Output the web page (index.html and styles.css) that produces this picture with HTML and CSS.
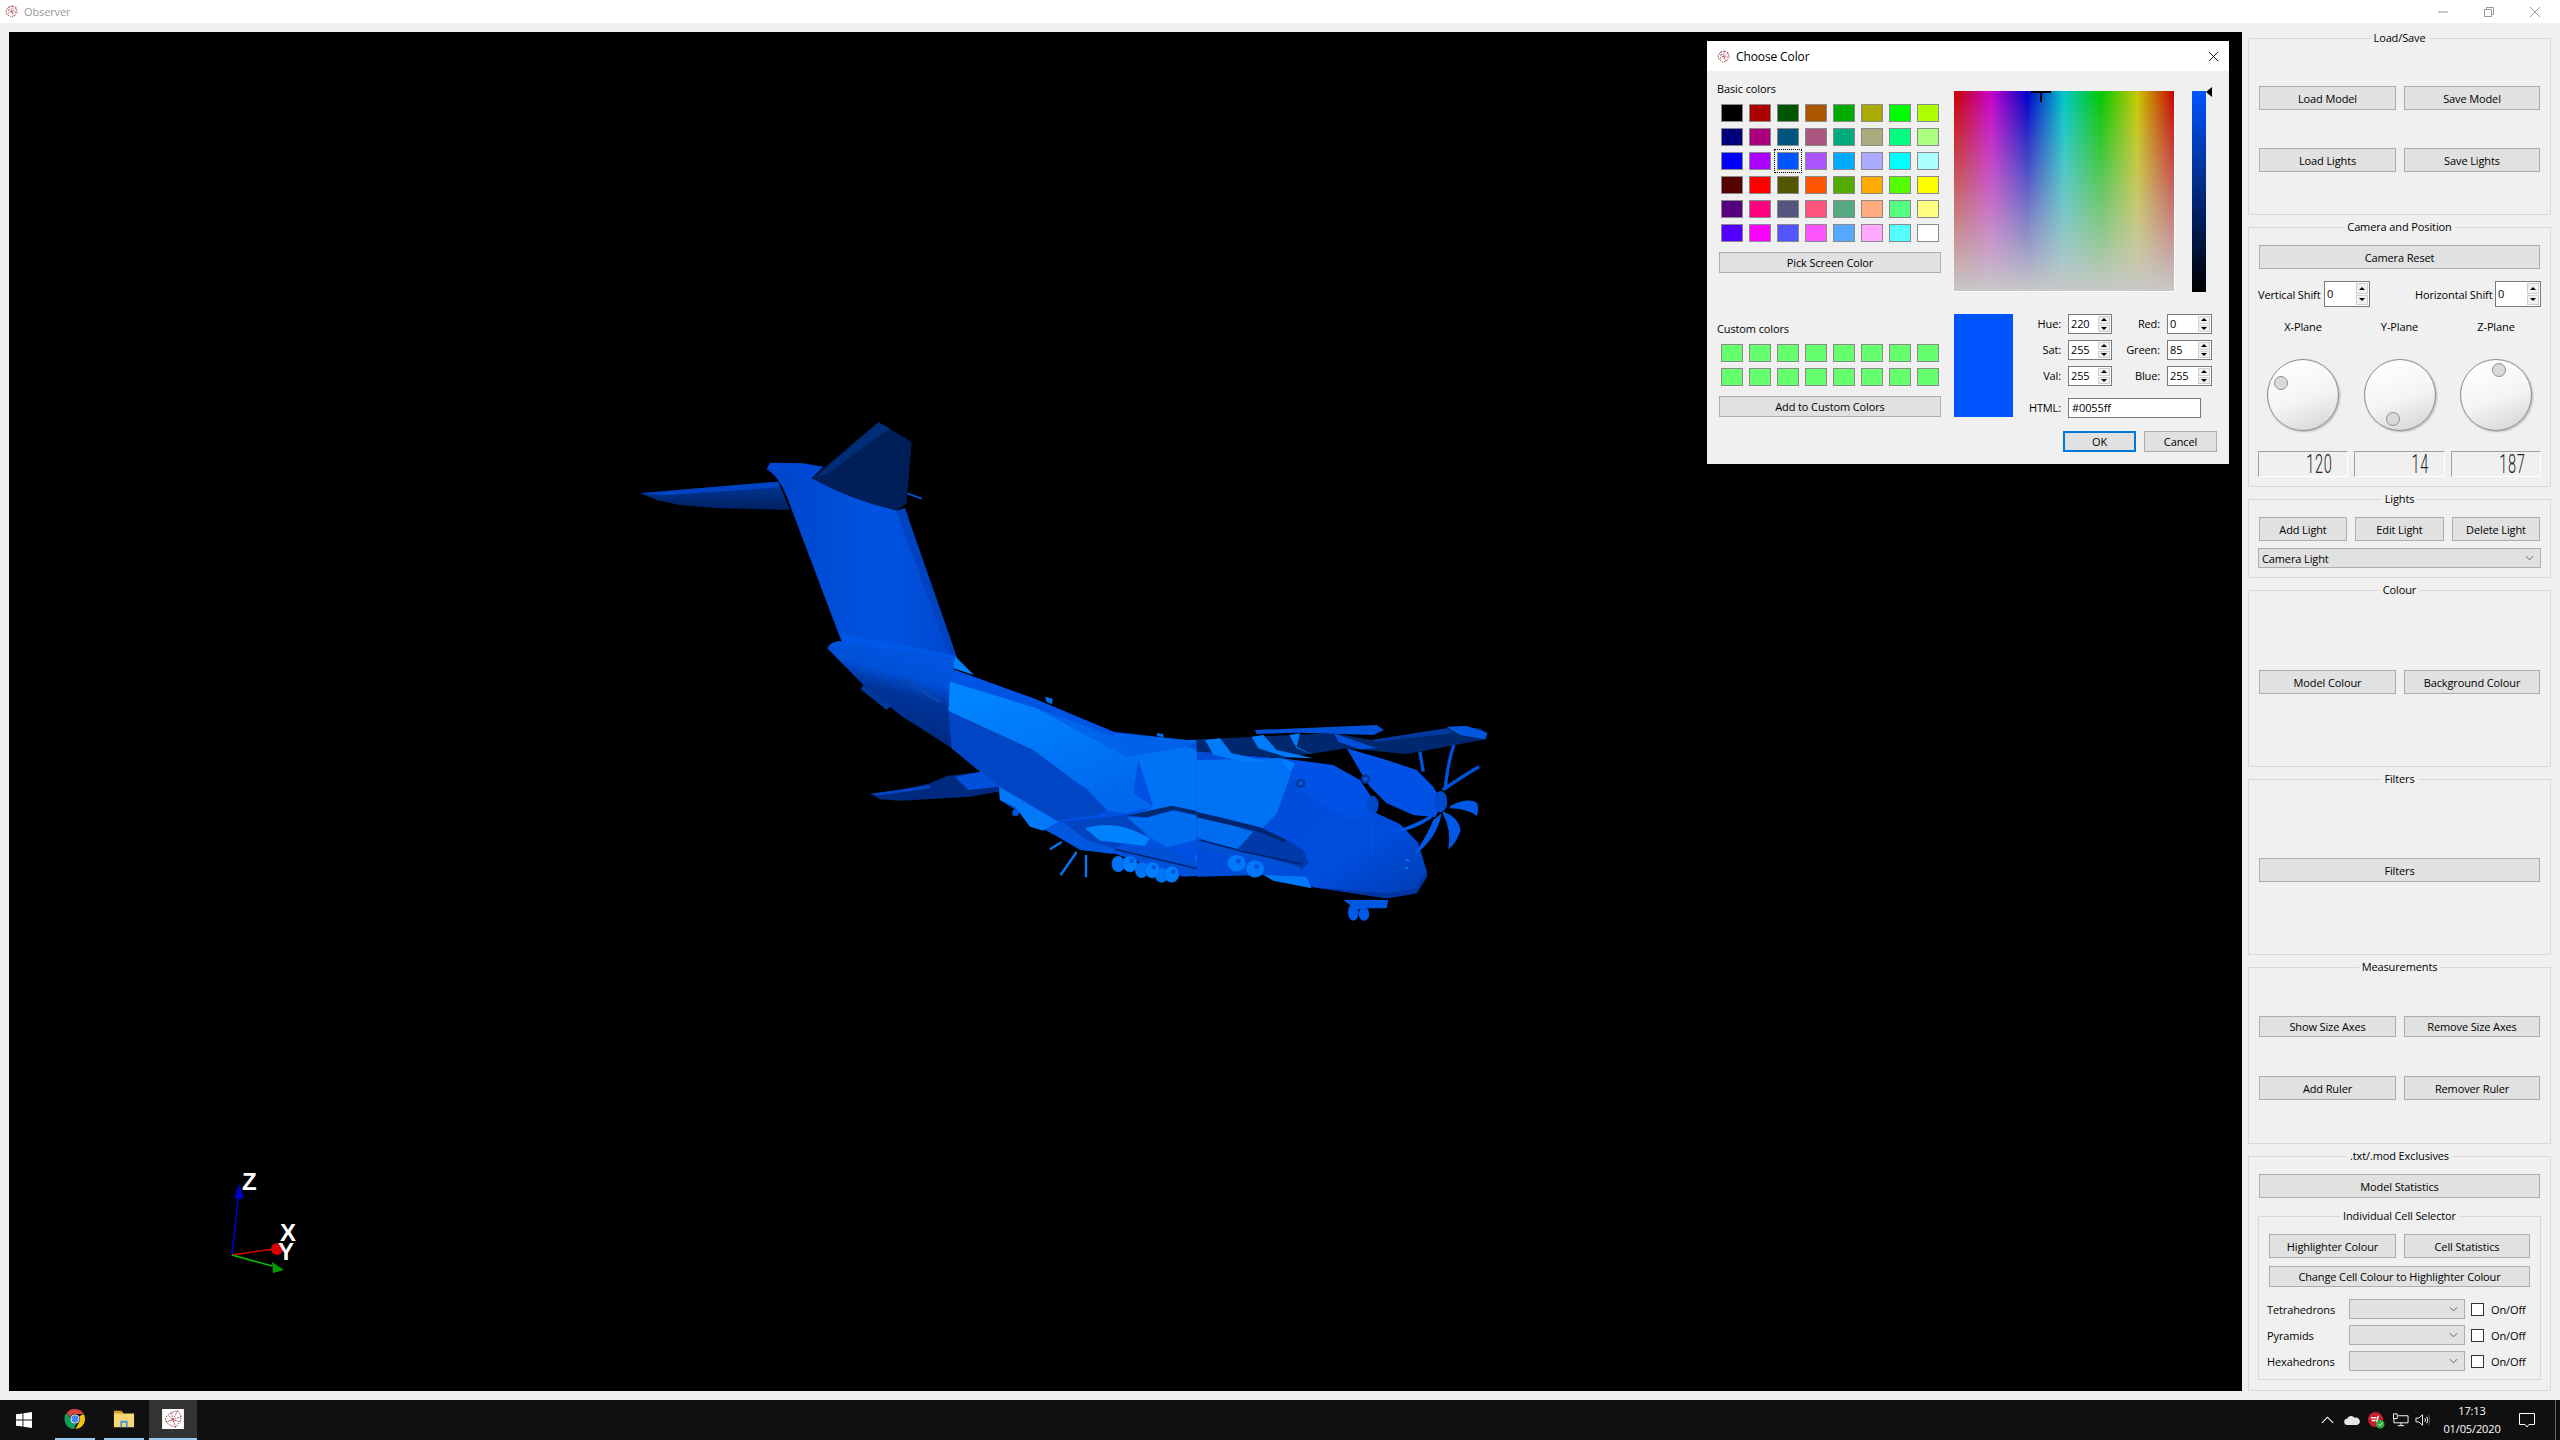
FILE: index.html
```html
<!DOCTYPE html>
<html lang="en">
<head>
    <meta charset="UTF-8">
    <title>Observer</title>
    <link rel="stylesheet" href="styles.css">
</head>
<body>
    <div class="titlebar">
        <svg class="app-icon" viewBox="0 0 14 14"><path d="M1 6 4 2 8 1 12 3 13 8 10 12 6 13 2 10ZM4 2 6 7 2 10M8 1 7 7 10 12M12 3 7 7 13 8M3 5 9 9" fill="none" stroke="#a8404c" stroke-width="1" stroke-dasharray="1.5 1"/></svg>
        <span class="titlebar-name">Observer</span>
        <div class="window-btns">
            <svg viewBox="0 0 12 12"><path d="M1 6h10" stroke="#999" fill="none"/></svg>
            <svg viewBox="0 0 12 12"><path d="M1.5 3.5h7v7h-7zM3.5 3.5v-2h7v7h-2" stroke="#999" fill="none"/></svg>
            <svg viewBox="0 0 12 12"><path d="M1 1l10 10M11 1 1 11" stroke="#999" fill="none"/></svg>
        </div>
    </div>

    <div class="main">
        <div class="viewport">
            <!-- model: each group is drawn on a 3x crop of that part of the plane -->
            <svg class="plane" viewBox="600 400 920 540">
                <defs>
                    <linearGradient id="wing-dark" x1="0" y1="0" x2="0" y2="1">
                        <stop offset="0" stop-color="#003a9e"/><stop offset="1" stop-color="#001f60"/>
                    </linearGradient>
                    <linearGradient id="boom" x1="0" y1="0" x2="1" y2="0">
                        <stop offset="0" stop-color="#0044c8"/><stop offset=".6" stop-color="#0054e2"/><stop offset="1" stop-color="#0048d0"/>
                    </linearGradient>
                    <linearGradient id="band" x1="0" y1="0" x2=".5" y2="1">
                        <stop offset="0" stop-color="#0088ff"/><stop offset=".55" stop-color="#0078fa"/><stop offset="1" stop-color="#0068ee"/>
                    </linearGradient>
                    <linearGradient id="cone" x1=".6" y1="0" x2=".3" y2=".9">
                        <stop offset="0" stop-color="#0058e4"/><stop offset=".32" stop-color="#0050d8"/><stop offset=".5" stop-color="#00349a"/><stop offset="1" stop-color="#00267a"/>
                    </linearGradient>
                    <linearGradient id="nose" x1="0" y1="0" x2="1" y2="1">
                        <stop offset="0" stop-color="#004cd8"/><stop offset=".7" stop-color="#004cdc"/><stop offset="1" stop-color="#003cb0"/>
                    </linearGradient>
                </defs>

                <!-- tail -->
                <g transform="translate(620 410) scale(.3333)">
                    <path d="M60 250 475 215 510 300 300 295 180 285 110 270Z" fill="url(#wing-dark)"/>
                    <path d="M60 250 475 215 478 232 130 256Z" fill="#0044c4"/>
                    <path d="M862 250 905 266" stroke="#0050d8" stroke-width="6"/>
                    <path d="M440 178 450 158 550 160 610 170 575 205Z" fill="#0048d4"/>
                    <path d="M440 178Q480 200 510 285L665 695 1005 750 855 295 830 302 575 205 500 180Z" fill="url(#boom)"/>
                    <path d="M855 295 1012 745 990 745 830 305Z" fill="#0042c0"/>
                    <path d="M668 672 1000 735 1005 750 665 695Z" fill="#0058e8"/>
                    <path d="M775 37 875 95 860 280 830 302Q690 270 575 205Z" fill="#001f58"/>
                    <path d="M775 37 810 55 625 190 590 200Z" fill="#002d78"/>
                    <path d="M622 715Q630 695 660 693L1005 750 1000 778 986 875 995 1014 840 915 730 825Z" fill="url(#cone)"/>
                    <path d="M1005 738 1062 795 1000 775Z" fill="#0080ff"/>
                    <path d="M845 805 958 875" stroke="#0a46b4" stroke-width="10"/>
                    <path d="M730 825 815 885 800 900 722 838Z" fill="#00389a"/>
                </g>

                <!-- fuselage and left wing -->
                <g transform="translate(900 640) scale(.3333)">
                    <path d="M-90 462 0 450 90 430 140 408 245 395 295 440 295 455 210 470 0 482-60 478Z" fill="#002a80"/>
                    <path d="M165 410 245 395 295 440 205 450Z" fill="#0050dc"/>
                    <path d="M-90 462 90 436 90 445-60 466Z" fill="#0048c8"/>
                    <path d="M435 170 458 176 456 192 440 186ZM770 279 790 282 790 292 772 288Z" fill="#0070f0"/>
                    <path d="M160 88 400 175 640 275 860 300 1020 295 1020 700 850 710 640 640 540 630 440 570 300 480 295 440 155 325 146 185Z" fill="#0050e2"/>
                    <path d="M158 92 400 175 640 275 650 292 410 205 150 125Z" fill="#0054e4"/>
                    <path d="M150 125 410 205 680 350 715 360 700 460 760 500 680 520 620 510 560 445 145 212Z" fill="url(#band)"/>
                    <path d="M410 205 650 292 680 350Z" fill="#0064ec"/>
                    <path d="M145 212 400 330 560 450 620 510 590 525 450 545 300 440 155 325Z" fill="#0046c4"/>
                    <path d="M640 280 860 300 910 300 860 320 680 350Z" fill="#0062ea"/>
                    <path d="M680 350 860 320 1020 370 1020 550 820 500 700 530 760 500 715 360Z" fill="#0072f6"/>
                    <path d="M298 440 475 545 430 572 390 560 345 500 300 480Z" fill="#0078f8"/>
                    <circle cx="347" cy="518" r="10" fill="#0058d8"/>
                    <path d="M435 570 490 545 560 600 640 625 640 642 550 630Z" fill="#0058e0"/>
                    <path d="M490 545 680 525 740 585 640 625 560 600Z" fill="#0044c0"/>
                    <path d="M680 527 815 497 1020 540 1020 554 820 510 740 532Z" fill="#00296e"/>
                    <path d="M680 532 740 534 820 512 1020 554 1020 625 890 600 800 622 750 592Z" fill="#006cf0"/>
                    <path d="M555 565Q650 535 750 595L735 617 600 602Z" fill="#0082ff"/>
                    <path d="M640 625 800 622 930 690 890 707 700 655Z" fill="#0050d6"/>
                    <path d="M645 628 900 688M890 597 1020 630" stroke="#00246e" stroke-width="5"/>
                    <path d="M450 628 485 606M482 705 530 636M558 712 558 645" stroke="#0078f8" stroke-width="7"/>
                </g>

                <!-- wheels of the main gear -->
                <g transform="translate(900 640) scale(.3333)">
                    <g fill="#0074f4">
                        <ellipse cx="655" cy="672" rx="20" ry="24"/><ellipse cx="725" cy="690" rx="20" ry="24"/><ellipse cx="785" cy="706" rx="20" ry="22"/>
                        <ellipse cx="905" cy="655" rx="20" ry="24"/><ellipse cx="985" cy="672" rx="20" ry="24"/>
                    </g>
                    <g fill="#0080ff" stroke="#0058e0" stroke-width="2">
                        <ellipse cx="690" cy="672" rx="22" ry="24"/><ellipse cx="757" cy="690" rx="22" ry="24"/><ellipse cx="815" cy="703" rx="22" ry="24"/>
                        <ellipse cx="940" cy="655" rx="22" ry="24"/><ellipse cx="1012" cy="670" rx="22" ry="24"/>
                    </g>
                    <g fill="#0052d8">
                        <circle cx="695" cy="662" r="7"/><circle cx="762" cy="682" r="7"/><circle cx="820" cy="695" r="7"/>
                        <circle cx="945" cy="645" r="7"/><circle cx="1016" cy="660" r="7"/>
                    </g>
                </g>

                <!-- wing, engines and nose -->
                <g transform="translate(1200 680) scale(.3333)">
                    <path d="M-10 215 245 235 400 300 520 395 600 432 655 488 682 580 650 640 560 655 340 622 300 600 190 585-10 590Z" fill="url(#nose)"/>
                    <path d="M-10 240 245 235 285 250 230 400 125 510 0 470-10 400Z" fill="#0072f6"/>
                    <path d="M340 622 560 640 650 625 680 575 682 590 650 640 560 655Z" fill="#0034a0"/>
                    <path d="M-10 395 60 420 180 445 260 480 310 510 325 550 300 572 130 510-10 472Z" fill="#003aa8"/>
                    <path d="M-10 408 60 425 160 455 110 510-10 472Z" fill="#006cf0"/>
                    <path d="M-10 396 60 412 180 442 260 480 250 486 170 452 60 428-10 412Z" fill="#00246e"/>
                    <path d="M-10 475 130 512 300 560 300 575 130 540-10 505Z" fill="#0050d6"/>
                    <path d="M0 480 130 515 305 552" stroke="#00246e" stroke-width="5" fill="none"/>
                    <g fill="#0078f8" stroke="#0050d8" stroke-width="2">
                        <ellipse cx="110" cy="550" rx="28" ry="26"/><ellipse cx="165" cy="566" rx="28" ry="26"/>
                    </g>
                    <circle cx="115" cy="543" r="7" fill="#0052d8"/><circle cx="170" cy="560" r="7" fill="#0052d8"/>
                    <path d="M190 585 320 590 335 625 220 602Z" fill="#0078f8"/>
                    <path d="M618 540 628 543M615 562 624 565" stroke="#0090ff" stroke-width="4"/>

                    <path d="M-10 180 165 170 400 160 515 180 740 145 840 145 862 160 858 178 620 222 440 205 245 235 100 222-10 215Z" fill="#00286e"/>
                    <path d="M165 150 530 135 552 150 520 165 300 158 170 162Z" fill="#0050d8"/>
                    <path d="M515 180 740 145 760 160 530 185Z" fill="#003a9e"/>
                    <path d="M740 140 800 138 862 158 856 178 780 165Z" fill="#0058e0"/>
                    <path d="M402 160 430 170 530 205 480 208 415 185Z" fill="#0050dc"/>
                    <path d="M15 180 60 175 95 220 220 248 130 245 40 225ZM155 170 190 165 230 210 340 235 260 232 175 205ZM268 165 300 160 290 200 340 225 290 205Z" fill="#007cfa"/>
                    <path d="M245 235 400 255 480 300 520 360 510 415 440 415 360 370 300 330 270 280Z" fill="#0052e6"/>
                    <path d="M245 235 285 250 270 280Z" fill="#0080ff"/>
                    <path d="M440 205 560 240 650 270 700 320 728 370 705 412 640 405 560 370 510 320 490 290Z" fill="#0052e6"/>
                    <circle cx="302" cy="310" r="14" fill="#00389e"/><circle cx="497" cy="297" r="14" fill="#00389e"/>
                    <circle cx="302" cy="310" r="7" fill="#0058e0"/><circle cx="497" cy="297" r="7" fill="#0058e0"/>
                    <path d="M735 330Q745 240 762 195M728 330Q800 280 838 260M670 275Q665 250 660 215" stroke="#0052dc" stroke-width="10" fill="none"/>
                    <path d="M750 378Q810 350 832 370 838 390 830 408 800 385 750 385ZM730 395Q775 410 782 450 770 490 745 508 755 450 728 400ZM725 400Q710 480 640 527 680 470 700 420ZM695 415Q630 460 575 455 630 440 695 405Z" fill="#0058e6"/>
                    <ellipse cx="722" cy="365" rx="20" ry="32" fill="#0048cc"/>
                    <path d="M505 420Q450 470 422 518M515 410Q510 470 517 525M435 405Q400 420 380 432" stroke="#0052dc" stroke-width="8" fill="none"/>
                    <ellipse cx="518" cy="375" rx="18" ry="28" fill="#0048cc"/>
                    <path d="M430 660 565 660 560 685 490 685 470 690Z" fill="#0058e0"/>
                    <ellipse cx="460" cy="697" rx="16" ry="25" fill="#0058e6"/><ellipse cx="492" cy="702" rx="16" ry="20" fill="#0058e6"/>
                </g>
            </svg>
            <!-- orientation axes -->
            <svg class="axes" viewBox="0 0 120 150">
                <path d="M32 105 39 40" stroke="#0000d8" stroke-width="1.5"/>
                <path d="M39 34 34 48 Q39 50 44 48Z" fill="#0000c0"/>
                <path d="M32 105 74 99" stroke="#d80000" stroke-width="1.5"/>
                <circle cx="77" cy="99" r="6" fill="#d80000"/>
                <path d="M32 105 72 116" stroke="#00c000" stroke-width="1.5"/>
                <path d="M84 120 72 112 73 123Z" fill="#009a00"/>
                <text class="axis-label" x="42" y="40">Z</text>
                <text class="axis-label" x="80" y="91">X</text>
                <text class="axis-label" x="78" y="110">Y</text>
            </svg>

            <div class="dialog">
                <div class="dialog-title">
                    <svg class="dialog-icon" viewBox="0 0 14 14"><path d="M1 6 4 2 8 1 12 3 13 8 10 12 6 13 2 10ZM4 2 6 7 2 10M8 1 7 7 10 12M12 3 7 7 13 8M3 5 9 9" fill="none" stroke="#a8404c" stroke-width="1" stroke-dasharray="1.5 1"/></svg>
                    <span>Choose Color</span>
                    <svg class="dialog-close" viewBox="0 0 12 12"><path d="M1 1l10 10M11 1 1 11" stroke="#000" fill="none"/></svg>
                </div>
                <div class="dialog-body">
                    <div class="dialog-left">
                        <div class="small-label">Basic colors</div>
                        <div class="swatches">
                            <span class="swatch" style="background:#000000"></span><span class="swatch" style="background:#aa0000"></span><span class="swatch" style="background:#005500"></span><span class="swatch" style="background:#aa5500"></span><span class="swatch" style="background:#00aa00"></span><span class="swatch" style="background:#aaaa00"></span><span class="swatch" style="background:#00ff00"></span><span class="swatch" style="background:#aaff00"></span>
                            <span class="swatch" style="background:#00007f"></span><span class="swatch" style="background:#aa007f"></span><span class="swatch" style="background:#00557f"></span><span class="swatch" style="background:#aa557f"></span><span class="swatch" style="background:#00aa7f"></span><span class="swatch" style="background:#aaaa7f"></span><span class="swatch" style="background:#00ff7f"></span><span class="swatch" style="background:#aaff7f"></span>
                            <span class="swatch" style="background:#0000ff"></span><span class="swatch" style="background:#aa00ff"></span><span class="swatch selected" style="background:#0055ff"></span><span class="swatch" style="background:#aa55ff"></span><span class="swatch" style="background:#00aaff"></span><span class="swatch" style="background:#aaaaff"></span><span class="swatch" style="background:#00ffff"></span><span class="swatch" style="background:#aaffff"></span>
                            <span class="swatch" style="background:#550000"></span><span class="swatch" style="background:#ff0000"></span><span class="swatch" style="background:#555500"></span><span class="swatch" style="background:#ff5500"></span><span class="swatch" style="background:#55aa00"></span><span class="swatch" style="background:#ffaa00"></span><span class="swatch" style="background:#55ff00"></span><span class="swatch" style="background:#ffff00"></span>
                            <span class="swatch" style="background:#55007f"></span><span class="swatch" style="background:#ff007f"></span><span class="swatch" style="background:#55557f"></span><span class="swatch" style="background:#ff557f"></span><span class="swatch" style="background:#55aa7f"></span><span class="swatch" style="background:#ffaa7f"></span><span class="swatch" style="background:#55ff7f"></span><span class="swatch" style="background:#ffff7f"></span>
                            <span class="swatch" style="background:#5500ff"></span><span class="swatch" style="background:#ff00ff"></span><span class="swatch" style="background:#5555ff"></span><span class="swatch" style="background:#ff55ff"></span><span class="swatch" style="background:#55aaff"></span><span class="swatch" style="background:#ffaaff"></span><span class="swatch" style="background:#55ffff"></span><span class="swatch" style="background:#ffffff"></span>
                        </div>
                        <button class="btn wide-btn">Pick Screen Color</button>
                        <div class="small-label custom-label">Custom colors</div>
                        <div class="swatches">
                            <span class="swatch custom"></span><span class="swatch custom"></span><span class="swatch custom"></span><span class="swatch custom"></span><span class="swatch custom"></span><span class="swatch custom"></span><span class="swatch custom"></span><span class="swatch custom"></span>
                            <span class="swatch custom"></span><span class="swatch custom"></span><span class="swatch custom"></span><span class="swatch custom"></span><span class="swatch custom"></span><span class="swatch custom"></span><span class="swatch custom"></span><span class="swatch custom"></span>
                        </div>
                        <button class="btn wide-btn">Add to Custom Colors</button>
                    </div>
                    <div class="dialog-right">
                        <div class="picker">
                            <div class="color-field">
                                <span class="cross-h"></span>
                                <span class="cross-v"></span>
                            </div>
                            <div class="lum-strip"><span class="lum-arrow"></span></div>
                        </div>
                        <div class="values">
                            <div class="preview"></div>
                            <div class="value-form">
                                <div class="value-grid">
                                    <label class="value-label">Hue:</label>
                                    <div class="spin"><span class="spin-value">220</span><span class="spin-arrows"><i class="up"></i><i class="down"></i></span></div>
                                    <label class="value-label">Red:</label>
                                    <div class="spin"><span class="spin-value">0</span><span class="spin-arrows"><i class="up"></i><i class="down"></i></span></div>
                                    <label class="value-label">Sat:</label>
                                    <div class="spin"><span class="spin-value">255</span><span class="spin-arrows"><i class="up"></i><i class="down"></i></span></div>
                                    <label class="value-label">Green:</label>
                                    <div class="spin"><span class="spin-value">85</span><span class="spin-arrows"><i class="up"></i><i class="down"></i></span></div>
                                    <label class="value-label">Val:</label>
                                    <div class="spin"><span class="spin-value">255</span><span class="spin-arrows"><i class="up"></i><i class="down"></i></span></div>
                                    <label class="value-label">Blue:</label>
                                    <div class="spin"><span class="spin-value">255</span><span class="spin-arrows"><i class="up"></i><i class="down"></i></span></div>
                                </div>
                                <div class="html-row">
                                    <label class="value-label">HTML:</label>
                                    <div class="html-input">#0055ff</div>
                                </div>
                            </div>
                        </div>
                        <div class="dialog-actions">
                            <button class="btn ok-btn">OK</button>
                            <button class="btn action-btn">Cancel</button>
                        </div>
                    </div>
                </div>
            </div>
        </div>

        <div class="panel">
            <div class="group load-group">
                <div class="group-title">Load/Save</div>
                <div class="two-btns"><button class="btn">Load Model</button><button class="btn">Save Model</button></div>
                <div class="two-btns next-row"><button class="btn">Load Lights</button><button class="btn">Save Lights</button></div>
            </div>

            <div class="group camera-group">
                <div class="group-title">Camera and Position</div>
                <button class="btn full-btn">Camera Reset</button>
                <div class="shift-row">
                    <div class="shift"><span class="shift-v">Vertical Shift</span><div class="spin shift-spin"><span class="spin-value">0</span><span class="spin-arrows"><i class="up"></i><i class="down"></i></span></div></div>
                    <div class="shift"><span class="shift-h">Horizontal Shift</span><div class="spin shift-spin"><span class="spin-value">0</span><span class="spin-arrows"><i class="up"></i><i class="down"></i></span></div></div>
                </div>
                <div class="planes">
                    <div class="plane-name">X-Plane</div>
                    <div class="plane-name">Y-Plane</div>
                    <div class="plane-name">Z-Plane</div>
                    <div class="dial"><span class="dial-dot dot-x"></span></div>
                    <div class="dial"><span class="dial-dot dot-y"></span></div>
                    <div class="dial"><span class="dial-dot dot-z"></span></div>
                    <div class="lcd"><span>120</span></div>
                    <div class="lcd"><span>14</span></div>
                    <div class="lcd"><span>187</span></div>
                </div>
            </div>

            <div class="group lights-group">
                <div class="group-title">Lights</div>
                <div class="three-btns"><button class="btn">Add Light</button><button class="btn">Edit Light</button><button class="btn">Delete Light</button></div>
                <div class="combo light-combo"><span>Camera Light</span><svg class="chevron" viewBox="0 0 10 6"><path d="M1 1l4 4 4-4" fill="none" stroke="#555"/></svg></div>
            </div>

            <div class="group colour-group">
                <div class="group-title">Colour</div>
                <div class="two-btns"><button class="btn">Model Colour</button><button class="btn">Background Colour</button></div>
            </div>

            <div class="group filters-group">
                <div class="group-title">Filters</div>
                <button class="btn full-btn">Filters</button>
            </div>

            <div class="group measure-group">
                <div class="group-title">Measurements</div>
                <div class="two-btns short-btns"><button class="btn">Show Size Axes</button><button class="btn">Remove Size Axes</button></div>
                <div class="two-btns next-row-m"><button class="btn">Add Ruler</button><button class="btn">Remover Ruler</button></div>
            </div>

            <div class="group mod-group">
                <div class="group-title">.txt/.mod Exclusives</div>
                <button class="btn full-btn">Model Statistics</button>
                <div class="group cell-group">
                    <div class="group-title">Individual Cell Selector</div>
                    <div class="cell-btns"><button class="btn">Highlighter Colour</button><button class="btn">Cell Statistics</button></div>
                    <button class="btn change-btn">Change Cell Colour to Highlighter Colour</button>
                    <div class="cell-rows">
                        <div class="cell-row"><span class="cell-name">Tetrahedrons</span><div class="combo cell-combo"><span></span><svg class="chevron" viewBox="0 0 10 6"><path d="M1 1l4 4 4-4" fill="none" stroke="#555"/></svg></div><span class="check"></span><span>On/Off</span></div>
                        <div class="cell-row"><span class="cell-name">Pyramids</span><div class="combo cell-combo"><span></span><svg class="chevron" viewBox="0 0 10 6"><path d="M1 1l4 4 4-4" fill="none" stroke="#555"/></svg></div><span class="check"></span><span>On/Off</span></div>
                        <div class="cell-row"><span class="cell-name">Hexahedrons</span><div class="combo cell-combo"><span></span><svg class="chevron" viewBox="0 0 10 6"><path d="M1 1l4 4 4-4" fill="none" stroke="#555"/></svg></div><span class="check"></span><span>On/Off</span></div>
                    </div>
                </div>
            </div>
        </div>
    </div>

    <div class="taskbar">
        <div class="task start">
            <svg viewBox="0 0 16 16"><path d="M0 2.3 6.5 1.4V7.6H0ZM7.4 1.3 16 0V7.6H7.4ZM0 8.4H6.5V14.6L0 13.7ZM7.4 8.4H16V16L7.4 14.7Z" fill="#fff"/></svg>
        </div>
        <div class="task running">
            <svg viewBox="0 0 24 24">
                <path d="M12 1A11 11 0 0 1 21.5 6.5H12A5.5 5.5 0 0 0 6.8 10L3.3 4.8A11 11 0 0 1 12 1Z" fill="#db4437"/>
                <path d="M21.5 6.5A11 11 0 0 1 12.5 23L16.8 15A5.5 5.5 0 0 0 16.6 9Z" fill="#f4c20d"/>
                <path d="M3.3 4.8 8 13A5 5 0 0 0 13.5 17L11 23A11 11 0 0 1 3.3 4.8Z" fill="#0f9d58"/>
                <circle cx="12" cy="12" r="5" fill="#fff"/><circle cx="12" cy="12" r="4" fill="#4285f4"/>
            </svg>
        </div>
        <div class="task running files">
            <svg viewBox="0 0 24 20">
                <path d="M1 1H9L11 3V5H1Z" fill="#d8a022"/>
                <path d="M1 4H23V19H1Z" fill="#f8d775"/>
                <path d="M8 12H16V19H14V14H10V19H8Z" fill="#3f9be0"/>
            </svg>
        </div>
        <div class="task running active">
            <svg class="task-app" viewBox="0 0 24 22">
                <rect width="24" height="22" fill="#fff"/>
                <path d="M4 9 10 4 17 2 21 8 20 14 15 20 9 18 4 14ZM10 4 12 12 4 14M17 2 12 12 15 20M21 8 12 12 20 14M8 8 14 15" fill="none" stroke="#a8404c" stroke-width="1" stroke-dasharray="2 1"/>
            </svg>
        </div>
        <div class="tray">
            <svg class="tray-chevron" viewBox="0 0 14 8"><path d="M1 7l6-6 6 6" fill="none" stroke="#fff" stroke-width="1.2"/></svg>
            <svg class="tray-cloud" viewBox="0 0 18 11"><path d="M4 11A3.5 3.5 0 0 1 3.5 4 5 5 0 0 1 12 3 4 4 0 0 1 15 11Z" fill="#e6e6e6"/></svg>
            <svg class="tray-badge" viewBox="0 0 18 18"><circle cx="8" cy="8" r="8" fill="#c4202c"/><path d="M3 6h6M4 9h4M11 4 9 11" stroke="#fff" stroke-width="1.5"/><circle cx="13" cy="13" r="4.5" fill="#2faa3f"/><path d="M11 13l1.5 1.5 2.5-3" stroke="#fff" fill="none"/></svg>
            <svg class="tray-net" viewBox="0 0 17 14"><path d="M5.5 2.5H16V10H1V5.5M8.5 10V13M5 13H12M.5.5H4.5V5.5H.5Z" fill="none" stroke="#fff"/></svg>
            <svg class="tray-sound" viewBox="0 0 17 14"><path d="M1 5H4L8 1.5V12.5L4 9H1Z" fill="none" stroke="#fff"/><path d="M10.5 5Q11.8 7 10.5 9M12.5 3.5Q14.5 7 12.5 10.5" fill="none" stroke="#fff"/><path d="M14.5 1.5Q17 7 14.5 12.5" fill="none" stroke="#666"/></svg>
            <div class="clock"><span>17:13</span><span>01/05/2020</span></div>
            <svg class="tray-note" viewBox="0 0 16 15"><path d="M.5.5H15.5V11.5H10L8 14 6 11.5H.5Z" fill="none" stroke="#fff"/></svg>
            <span class="show-desktop"></span>
        </div>
    </div>
</body>
</html>
```

FILE: styles.css
```css
* {
    box-sizing: border-box;
}
body {
    margin: 0;
    width: 2560px;
    height: 1440px;
    overflow: hidden;
    display: flex;
    flex-direction: column;
    background-color: #f0f0f0;
    font-family: "Open Sans", sans-serif;
    font-size: 11px;
    letter-spacing: -.12px;
    color: #000;
}
button {
    font: inherit;
    letter-spacing: inherit;
    color: inherit;
}

/* title bar */
.titlebar {
    height: 23px;
    flex: none;
    background-color: #fff;
    display: flex;
    align-items: center;
    padding-left: 5px;
    color: #999;
}
.app-icon {
    width: 13px;
    height: 13px;
}
.titlebar-name {
    margin-left: 6px;
}
.window-btns {
    margin-left: auto;
    margin-right: 19px;
    display: flex;
    gap: 34px;
}
.window-btns svg {
    width: 12px;
    height: 12px;
}

/* main area */
.main {
    flex: 1;
    display: flex;
    align-items: flex-start;
    padding: 9px 0 0 9px;
}
.viewport {
    position: relative;
    width: 2233px;
    height: 1359px;
    background-color: #000;
}
.plane {
    position: absolute;
    left: 591px;
    top: 368px;
    width: 920px;
    height: 540px;
}
.axes {
    position: absolute;
    left: 191px;
    top: 1118px;
    width: 120px;
    height: 150px;
}
.axis-label {
    font-family: "Liberation Sans", sans-serif;
    font-weight: bold;
    font-size: 24px;
    fill: #fff;
}

/* right panel */
.panel {
    width: 303px;
    margin: 6px 0 0 6px;
    display: flex;
    flex-direction: column;
    gap: 12px;
}
.group {
    position: relative;
    border: 1px solid #d9d9d9;
    padding: 0 10px;
}
.group-title {
    position: absolute;
    top: -9px;
    left: 50%;
    transform: translateX(-50%);
    padding: 0 3px;
    line-height: 16px;
    white-space: nowrap;
    background-color: #f0f0f0;
}
.load-group {
    height: 177px;
    padding-top: 47px;
}
.camera-group {
    height: 260px;
    padding-top: 17px;
}
.lights-group {
    height: 79px;
    padding-top: 17px;
}
.colour-group {
    height: 177px;
    padding-top: 79px;
}
.filters-group {
    height: 176px;
    padding-top: 78px;
}
.measure-group {
    height: 177px;
    padding-top: 48px;
}
.mod-group {
    height: 235px;
    padding-top: 17px;
}
.btn {
    display: block;
    height: 24px;
    padding: 0;
    background-color: #e1e1e1;
    border: 1px solid #adadad;
    text-align: center;
    white-space: nowrap;
}
.full-btn {
    width: 100%;
}
.two-btns {
    display: grid;
    grid-template-columns: 137px 136px;
    column-gap: 8px;
}
.next-row {
    margin-top: 38px;
}
.next-row-m {
    margin-top: 39px;
}
.short-btns .btn {
    height: 21px;
}
.three-btns {
    display: grid;
    grid-template-columns: 88px 89px 88px;
    column-gap: 8px;
}

/* spin boxes */
.spin {
    height: 20px;
    display: flex;
    background-color: #fff;
    border: 1px solid #7a7a7a;
}
.spin-value {
    flex: 1;
    padding-left: 2px;
    line-height: 18px;
}
.spin-arrows {
    width: 14px;
    padding: 1px;
    display: flex;
    flex-direction: column;
    gap: 1px;
}
.spin-arrows i {
    flex: 1;
    display: flex;
    align-items: center;
    justify-content: center;
    background-color: #f0f0f0;
    border: 1px solid #cfcfcf;
}
.spin-arrows i::after {
    content: "";
    border-left: 3px solid transparent;
    border-right: 3px solid transparent;
}
.spin-arrows .up::after {
    border-bottom: 3px solid #000;
}
.spin-arrows .down::after {
    border-top: 3px solid #000;
}

/* camera */
.shift-row {
    display: flex;
    justify-content: space-between;
    margin: 12px -1px 0;
    height: 26px;
}
.shift {
    display: flex;
    align-items: center;
}
.shift-v {
    width: 66px;
    white-space: nowrap;
}
.shift-h {
    width: 80px;
    white-space: nowrap;
}
.shift-spin {
    width: 46px;
    height: 26px;
}
.shift-spin .spin-value {
    line-height: 24px;
}
.planes {
    display: grid;
    grid-template-columns: 90px 91px 90px;
    column-gap: 6px;
    margin: 12px -1px 0;
    justify-content: space-between;
    justify-items: center;
}
.plane-name {
    height: 16px;
    line-height: 16px;
}
.dial {
    position: relative;
    width: 72px;
    height: 72px;
    margin: 24px 0 20px;
    border-radius: 50%;
    border: 1px solid #8a8a8a;
    background: linear-gradient(160deg, #ffffff 10%, #f4f4f4 55%, #d6d6d6 95%);
    box-shadow: 1px 1px 2px #b0b0b0;
}
.dial-dot {
    position: absolute;
    width: 14px;
    height: 14px;
    border-radius: 50%;
    border: 1px solid #8f8f8f;
    background-color: #d9d9d9;
}
.dot-x {
    left: 6px;
    top: 16px;
}
.dot-y {
    left: 21px;
    top: 52px;
}
.dot-z {
    left: 31px;
    top: 3px;
}
.lcd {
    width: 100%;
    height: 26px;
    display: flex;
    justify-content: flex-end;
    align-items: center;
    padding-right: 15px;
    border: 1px solid;
    border-color: #a0a0a0 #fff #fff #a0a0a0;
}
.lcd span {
    display: block;
    font-family: Roboto, sans-serif;
    font-weight: 300;
    font-size: 26px;
    line-height: 24px;
    letter-spacing: 1px;
    color: #222;
    transform: scaleX(.56);
    transform-origin: right center;
}

/* combos */
.combo {
    height: 20px;
    display: flex;
    align-items: center;
    justify-content: space-between;
    padding: 0 6px 0 3px;
    background-color: #e1e1e1;
    border: 1px solid #adadad;
}
.chevron {
    width: 9px;
    height: 6px;
}
.light-combo {
    margin: 7px -1px 0;
}

/* cell selector */
.cell-group {
    margin: 18px -1px 0;
    height: 164px;
    padding-top: 17px;
}
.cell-btns {
    display: grid;
    grid-template-columns: 127px 126px;
    column-gap: 8px;
}
.change-btn {
    width: 261px;
    height: 21px;
    margin-top: 8px;
}
.cell-rows {
    margin: 12px 0 0 -2px;
    display: flex;
    flex-direction: column;
    gap: 6px;
}
.cell-row {
    display: flex;
    align-items: center;
    height: 20px;
}
.cell-name {
    width: 82px;
}
.cell-combo {
    width: 116px;
}
.check {
    width: 13px;
    height: 13px;
    margin: 0 7px 0 6px;
    background-color: #fff;
    border: 1px solid #333;
}

/* colour dialog */
.dialog {
    position: absolute;
    left: 1698px;
    top: 9px;
    width: 522px;
    height: 423px;
    background-color: #f0f0f0;
}
.dialog-title {
    height: 30px;
    display: flex;
    align-items: center;
    padding-left: 10px;
    background-color: #fff;
    font-size: 12px;
}
.dialog-icon {
    width: 13px;
    height: 13px;
    margin-right: 6px;
}
.dialog-close {
    width: 11px;
    height: 11px;
    margin-left: auto;
    margin-right: 10px;
}
.dialog-body {
    display: flex;
    padding: 10px 0 0 10px;
}
.dialog-left {
    width: 237px;
}
.small-label {
    height: 16px;
    line-height: 16px;
}
.custom-label {
    margin-top: 48px;
}
.swatches {
    display: grid;
    grid-template-columns: repeat(8, 22px);
    grid-auto-rows: 18px;
    gap: 6px;
    margin: 7px 0 10px 4px;
}
.swatch {
    position: relative;
    border: 1px solid #8a8a8a;
}
.swatch.custom {
    background-color: #66ff6e;
}
.swatch.selected {
    outline: 1px dotted #000;
    outline-offset: 2px;
}
.wide-btn {
    width: 222px;
    height: 21px;
    margin-left: 2px;
}
.dialog-right {
    padding-top: 10px;
}
.picker {
    display: flex;
    gap: 17px;
    height: 201px;
}
.color-field {
    position: relative;
    width: 221px;
    background:
        linear-gradient(to bottom, rgba(200, 200, 200, 0), #c8c8c8),
        linear-gradient(to right, #c80000, #c800c8, #0000c8, #00c8c8, #00c800, #c8c800, #c80000);
    border-right: 1px solid #fff;
    border-bottom: 1px solid #fff;
}
.cross-h {
    position: absolute;
    left: 77px;
    top: 0;
    width: 20px;
    height: 2px;
    background-color: #000;
}
.cross-v {
    position: absolute;
    left: 86px;
    top: 0;
    width: 2px;
    height: 11px;
    background-color: #000;
}
.lum-strip {
    position: relative;
    width: 14px;
    background: linear-gradient(to bottom, #0055ff, #000);
}
.lum-arrow {
    position: absolute;
    left: 14px;
    top: -4px;
    border-top: 5px solid transparent;
    border-bottom: 5px solid transparent;
    border-right: 6px solid #000;
}
.values {
    display: flex;
    margin-top: 22px;
}
.preview {
    width: 59px;
    height: 103px;
    background-color: #0055ff;
}
.value-grid {
    display: grid;
    grid-template-columns: 55px 44px 55px 45px;
    grid-auto-rows: 20px;
    row-gap: 6px;
}
.value-label {
    display: block;
    padding-right: 7px;
    text-align: right;
    line-height: 20px;
}
.html-row {
    display: flex;
    margin-top: 12px;
}
.html-row .value-label {
    width: 55px;
}
.html-input {
    width: 133px;
    height: 20px;
    padding-left: 3px;
    line-height: 18px;
    background-color: #fff;
    border: 1px solid #7a7a7a;
}
.dialog-actions {
    display: flex;
    justify-content: flex-end;
    gap: 8px;
    width: 263px;
    margin-top: 13px;
}
.action-btn {
    width: 73px;
    height: 21px;
}
.ok-btn {
    width: 73px;
    height: 21px;
    border: 2px solid #0078d7;
}

/* taskbar */
.taskbar {
    height: 40px;
    flex: none;
    display: flex;
    background-color: #101010;
    color: #fff;
}
.task {
    width: 48px;
    margin-right: 7px;
    display: flex;
    align-items: center;
    justify-content: center;
}
.task svg {
    width: 22px;
    height: 22px;
}
.task.start svg {
    width: 16px;
    height: 16px;
}
.task.running {
    border-bottom: 2px solid #99c9ef;
    margin-right: 9px;
    width: 40px;
}
.task.files {
    margin-right: 5px;
}
.task.active {
    width: 48px;
    margin: 0;
    background-color: #333;
}
.task .task-app {
    width: 24px;
    height: 20px;
}
.tray {
    margin-left: auto;
    display: flex;
    align-items: center;
}
.tray-chevron {
    width: 13px;
    height: 8px;
    margin-right: 10px;
}
.tray-cloud {
    width: 16px;
    height: 10px;
    margin-right: 8px;
}
.tray-badge {
    width: 17px;
    height: 17px;
    margin-right: 8px;
}
.tray-net {
    width: 16px;
    height: 14px;
    margin-right: 6px;
}
.tray-sound {
    width: 16px;
    height: 14px;
    margin-right: 11px;
}
.clock {
    width: 60px;
    display: flex;
    flex-direction: column;
    align-items: center;
    line-height: 18px;
}
.tray-note {
    width: 16px;
    height: 15px;
    margin: 0 20px 0 17px;
}
.show-desktop {
    width: 1px;
    height: 40px;
    margin-right: 4px;
    background-color: #666;
}
```
